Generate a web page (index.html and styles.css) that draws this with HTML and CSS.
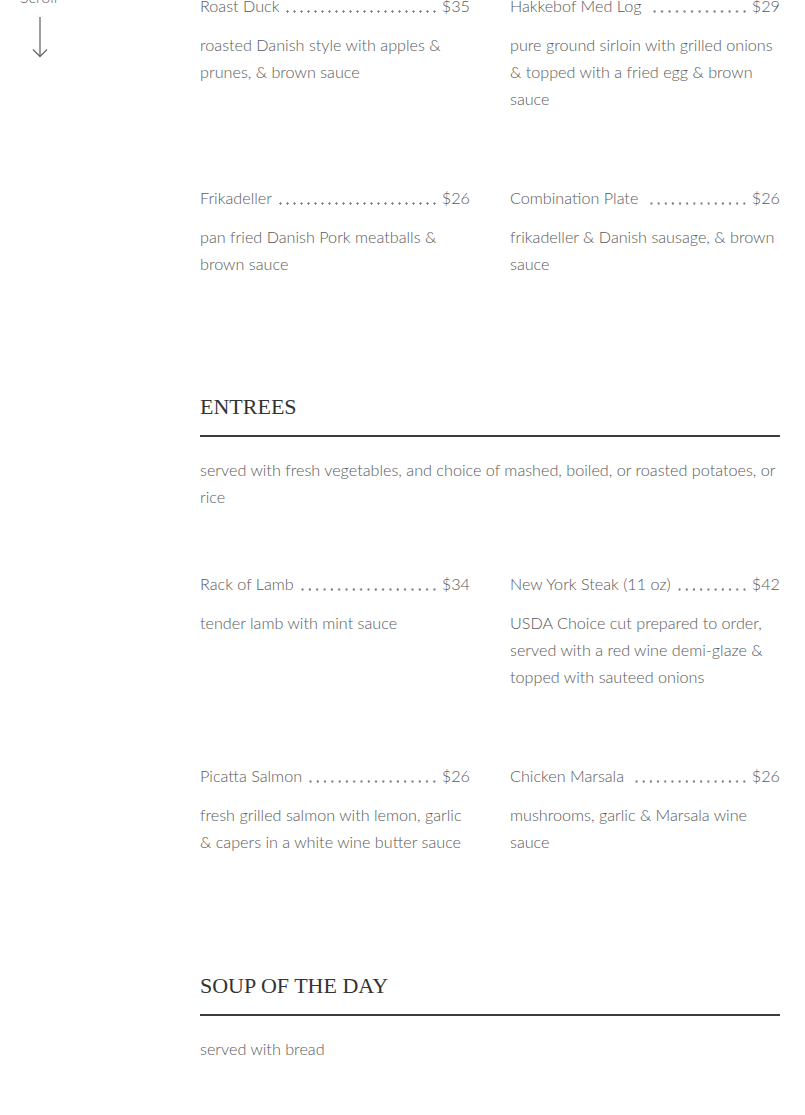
FILE: index.html
```html
<!DOCTYPE html>
<html lang="en">
<head>
<meta charset="utf-8">
<title>Menu</title>
<link rel="stylesheet" href="styles.css">
</head>
<body>
<div class="page">
  <aside class="side">
    <div class="scroll-label">Scroll</div>
    <svg class="scroll-arrow" width="16" height="42" viewBox="0 0 16 42" aria-hidden="true">
      <path d="M8 0 V39.5 M1 32.5 L8 39.5 L15 32.5" fill="none" stroke="#6a6a6a" stroke-width="1.3"/>
    </svg>
  </aside>
  <main class="menu">
    <section class="sec">
      <div class="grid">
        <div class="item">
          <div class="title"><span class="name">Roast Duck</span><span class="dots"></span><span class="price">$35</span></div>
          <p class="desc">roasted Danish style with apples &amp; prunes, &amp; brown sauce</p>
        </div>
        <div class="item">
          <div class="title"><span class="name">Hakkebof Med Log&nbsp;</span><span class="dots"></span><span class="price">$29</span></div>
          <p class="desc">pure ground sirloin with grilled onions &amp; topped with a fried egg &amp; brown sauce</p>
        </div>
        <div class="item">
          <div class="title"><span class="name">Frikadeller</span><span class="dots"></span><span class="price">$26</span></div>
          <p class="desc">pan fried Danish Pork meatballs &amp; brown sauce</p>
        </div>
        <div class="item">
          <div class="title"><span class="name">Combination Plate&nbsp;</span><span class="dots"></span><span class="price">$26</span></div>
          <p class="desc">frikadeller &amp; Danish sausage, &amp; brown sauce</p>
        </div>
      </div>
    </section>

    <section class="sec">
      <h2 class="sec-title">ENTREES</h2>
      <p class="note">served with fresh vegetables, and choice of mashed, boiled, or roasted potatoes, or rice</p>
      <div class="grid">
        <div class="item">
          <div class="title"><span class="name">Rack of Lamb</span><span class="dots"></span><span class="price">$34</span></div>
          <p class="desc">tender lamb with mint sauce</p>
        </div>
        <div class="item">
          <div class="title"><span class="name">New York Steak (11 oz)</span><span class="dots"></span><span class="price">$42</span></div>
          <p class="desc">USDA Choice cut prepared to order, served with a red wine demi-glaze &amp; topped with sauteed onions</p>
        </div>
        <div class="item">
          <div class="title"><span class="name">Picatta Salmon</span><span class="dots"></span><span class="price">$26</span></div>
          <p class="desc">fresh grilled salmon with lemon, garlic &amp; capers in a white wine butter sauce</p>
        </div>
        <div class="item">
          <div class="title"><span class="name">Chicken Marsala&nbsp;</span><span class="dots"></span><span class="price">$26</span></div>
          <p class="desc">mushrooms, garlic &amp; Marsala wine sauce</p>
        </div>
      </div>
    </section>

    <section class="sec soup">
      <h2 class="sec-title">SOUP OF THE DAY</h2>
      <p class="note">served with bread</p>
    </section>
  </main>
</div>
</body>
</html>
```

FILE: styles.css
```css
* { box-sizing: border-box; }

html, body {
  margin: 0;
  padding: 0;
  background: #ffffff;
}

body {
  font-family: "Lato", "Liberation Sans", sans-serif;
  font-weight: 300;
  color: #5a5a5a;
  font-size: 16.2px;
}

.page {
  display: flex;
  margin-top: -21px;
}

.side {
  width: 200px;
  flex: none;
  padding-top: 8px;
  padding-left: 20px;
  display: flex;
  flex-direction: column;
}

.scroll-label {
  font-size: 16px;
  line-height: 20px;
  color: #666;
}

.scroll-arrow {
  margin-top: 10px;
  margin-left: 12px;
  display: block;
}

.menu {
  width: 580px;
  flex: none;
  padding-top: 13px;
}

.grid {
  display: grid;
  grid-template-columns: 270px 270px;
  column-gap: 40px;
}

.item {
  min-height: 192px;
}

.title {
  display: flex;
  line-height: 27px;
  white-space: nowrap;
}

.name { flex: none; }

.dots {
  flex: 1;
  min-width: 0;
  margin: 0 4px 0 5px;
  background-image: radial-gradient(circle at center, #7c7c7c 0, #7c7c7c 0.9px, rgba(124,124,124,0) 1.4px);
  background-size: 7px 3px;
  background-repeat: space no-repeat;
  background-position: right 0 bottom 6px;
}

.price { flex: none; }

.desc {
  margin: 12px 0 0;
  line-height: 27px;
}

.sec-title {
  margin: 16px 0 0;
  font-family: "Liberation Serif", "Times New Roman", serif;
  font-weight: 400;
  font-size: 22px;
  line-height: 30px;
  color: #333;
  padding-bottom: 13px;
  border-bottom: 2px solid #3c3c3c;
}

.soup .sec-title {
  margin-top: 17.5px;
}

.note {
  margin: 18.5px 0 0;
  line-height: 27px;
}

.sec .note + .grid {
  margin-top: 60px;
}
```
